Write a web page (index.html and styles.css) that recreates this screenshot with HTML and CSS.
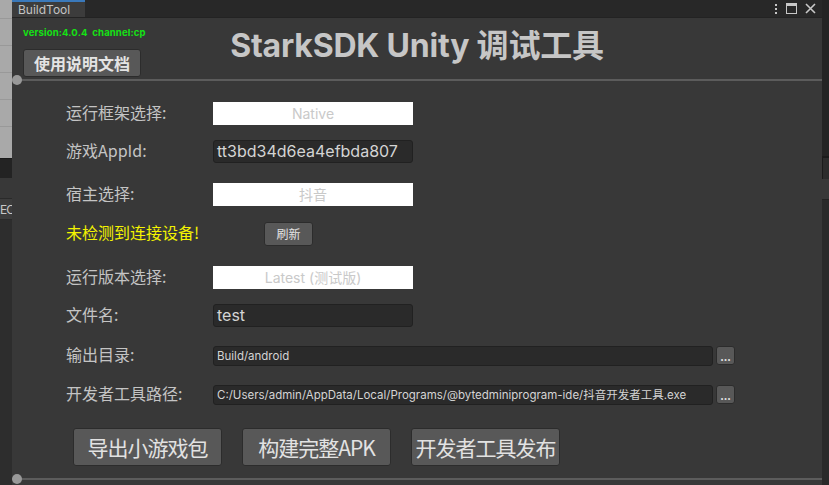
FILE: index.html
```html
<!DOCTYPE html>
<html>
<head>
<meta charset="utf-8">
<link rel="stylesheet" href="styles.css">
</head>
<body>
<div class="screen">
  <div class="side-left">
    <div class="grid-area">
      <div class="gline"></div><div class="gline"></div><div class="gline"></div><div class="gline"></div><div class="gline"></div>
    </div>
    <div class="dark-band"></div>
    <div class="mid-band"></div>
    <div class="ec-band">EC</div>
    <div class="rest"></div>
  </div>
  <div class="window">
    <div class="titlebar">
      <div class="tab">BuildTool</div>
      <div class="tb-icons">
        <svg width="4" height="12" viewBox="0 0 4 12"><rect x="1" y="1" width="2" height="2" fill="#c8c8c8"/><rect x="1" y="5" width="2" height="2" fill="#c8c8c8"/><rect x="1" y="9" width="2" height="2" fill="#c8c8c8"/></svg>
        <svg width="11" height="11" viewBox="0 0 11 11"><rect x="0.5" y="0.5" width="10" height="10" fill="none" stroke="#c8c8c8"/><rect x="0.5" y="0.5" width="10" height="2.5" fill="#c8c8c8"/></svg>
        <svg width="11" height="11" viewBox="0 0 11 11"><path d="M1 1 L10 10 M10 1 L1 10" stroke="#c8c8c8" stroke-width="1.6"/></svg>
      </div>
    </div>
    <div class="content">
      <div class="header">
        <div class="header-left">
          <div class="version">version:4.0.4&nbsp; channel:cp</div>
          <button class="btn btn-doc">使用说明文档</button>
        </div>
        <h1 class="title">StarkSDK Unity 调试工具</h1>
        <div></div>
      </div>
      <div class="separator"><span class="knob"></span></div>
      <div class="form">
        <div class="row r1"><span class="label">运行框架选择:</span><div class="select">Native</div></div>
        <div class="row r2"><span class="label">游戏AppId:</span><div class="input">tt3bd34d6ea4efbda807</div></div>
        <div class="row r3"><span class="label">宿主选择:</span><div class="select">抖音</div></div>
        <div class="row r4"><span class="label warn">未检测到连接设备!</span><button class="btn btn-refresh">刷新</button></div>
        <div class="row r5"><span class="label">运行版本选择:</span><div class="select">Latest (测试版)</div></div>
        <div class="row r6"><span class="label">文件名:</span><div class="input">test</div></div>
        <div class="row r7"><span class="label">输出目录:</span><div class="input input-wide">Build/android</div><button class="btn btn-dots">...</button></div>
        <div class="row r8"><span class="label">开发者工具路径:</span><div class="input input-wide">C:/Users/admin/AppData/Local/Programs/@bytedminiprogram-ide/抖音开发者工具.exe</div><button class="btn btn-dots">...</button></div>
      </div>
      <div class="actions">
        <button class="btn btn-big">导出小游戏包</button>
        <button class="btn btn-big">构建完整APK</button>
        <button class="btn btn-big">开发者工具发布</button>
      </div>
      <div class="separator bottom"><span class="knob"></span></div>
    </div>
  </div>
  <div class="side-right">
    <div class="r-top"></div>
    <div class="r-band"></div>
    <div class="r-band2"></div>
    <div class="r-rest"></div>
  </div>
</div>
</body>
</html>
```

FILE: styles.css
```css
* { box-sizing: border-box; }
html, body { margin: 0; padding: 0; }
body {
  width: 829px; height: 485px; overflow: hidden;
  background: #282828;
  font-family: "Inter", "Noto Sans CJK SC", sans-serif;
}
.screen { display: flex; width: 829px; height: 485px; }

.side-left { width: 12px; display: flex; flex-direction: column; }
.grid-area { height: 158px; background: #a9a9a9; display: flex; flex-direction: column; padding-top: 18px; gap: 26px; }
.gline { height: 1px; background: #999; }
.dark-band { height: 20px; background: #232323; border-top: 1px solid #1a1a1a; }
.mid-band { height: 21px; background: #383838; border-bottom: 1px solid #2a2a2a; }
.ec-band { height: 21px; background: #3c3c3c; color: #c8c8c8; font-size: 12px; line-height: 21px; padding-left: 0; letter-spacing: -1px; overflow: hidden; border-bottom: 1px solid #2a2a2a; white-space: nowrap; }
.rest { flex: 1; background: #2d2d2d; }

.side-right { width: 7px; display: flex; flex-direction: column; }
.r-top { height: 158px; background: #242424; border-bottom: 2px solid #1b1b1b; }
.r-band { height: 21px; background: #2c2c2c; border-left: 1px solid #1b1b1b; }
.r-band2 { height: 21px; background: #383838; border-bottom: 1px solid #222; }
.r-rest { flex: 1; background: #2a2a2a; }

.window { width: 810px; display: flex; flex-direction: column; background: #383838; }
.titlebar { height: 18px; background: #282828; display: flex; align-items: stretch; justify-content: space-between; border-bottom: 1px solid #232323; }
.tab {
  width: 73px; background: #3c3c3c; color: #c4c4c4; font-size: 12px;
  line-height: 16px; padding-left: 6px; border-top: 2px solid #3a79bb;
}
.tb-icons { display: flex; align-items: center; gap: 8px; padding-right: 6px; }

.content { flex: 1; display: flex; flex-direction: column; }
.header { display: grid; grid-template-columns: 1fr auto 1fr; height: 61px; }
.header-left { padding-left: 11px; padding-top: 8px; display: flex; flex-direction: column; align-items: flex-start; }
.version { color: #14e214; font-size: 9.5px; font-weight: 700; line-height: 13px; letter-spacing: 0.15px; }
.btn {
  font-family: "Noto Sans CJK SC", sans-serif;
  background: #585858; color: #e4e4e4; border: 1px solid #2c2c2c; border-radius: 3px;
  padding: 0; cursor: default;
}
.btn-doc { margin-top: 10px; width: 118px; height: 28px; font-size: 16px; font-weight: 700; line-height: 26px; }
.title { margin: 0; padding-top: 9px; color: #c6c6c6; font-size: 32px; font-weight: 700; line-height: 38px; letter-spacing: -0.2px; white-space: nowrap; font-family: "Inter", "Noto Sans CJK SC", sans-serif; }

.separator { position: relative; height: 2px; background: #5c5c5c; }
.knob { position: absolute; left: 0; top: -4px; width: 10px; height: 10px; border-radius: 50%; background: #999; }
.separator.bottom { margin-top: 12px; }

.form { display: flex; flex-direction: column; padding-left: 54px; padding-top: 21px; }
.row { display: flex; align-items: center; height: 23px; }
.r2 { margin-top: 15px; }
.r3 { margin-top: 20px; }
.r4 { margin-top: 16px; }
.r5 { margin-top: 21px; }
.r6 { margin-top: 15px; }
.r7 { margin-top: 17px; }
.r8 { margin-top: 16px; }
.label { width: 147px; color: #c4c4c4; font-size: 16px; line-height: 20px; padding-bottom: 4px; font-family: "Noto Sans CJK SC", sans-serif; white-space: nowrap; }
.label.warn { color: #f4f400; font-size: 16px; width: 198px; padding-bottom: 3px; }
.select { width: 200px; height: 23px; background: #fff; color: #c9c9c9; font-size: 14px; text-align: center; line-height: 23px; }
.input { width: 200px; height: 23px; background: #2a2a2a; border: 1px solid #212121; border-radius: 3px; color: #d4d4d4; font-size: 16px; line-height: 21px; padding-left: 3px; white-space: nowrap; overflow: hidden; }
.input-wide { width: 500px; height: 20px; font-size: 11.5px; line-height: 18px; }
.btn-refresh { width: 49px; height: 24px; font-size: 12px; line-height: 22px; }
.btn-dots { margin-left: 3px; width: 19px; height: 19px; font-size: 11px; line-height: 14px; color: #ddd; font-weight: 700; }

.actions { display: flex; gap: 20px; padding-left: 61px; margin-top: 22px; }
.btn-big { width: 149px; height: 38px; font-size: 21px; line-height: 36px; color: #e2e2e2; letter-spacing: -1px; }
```
